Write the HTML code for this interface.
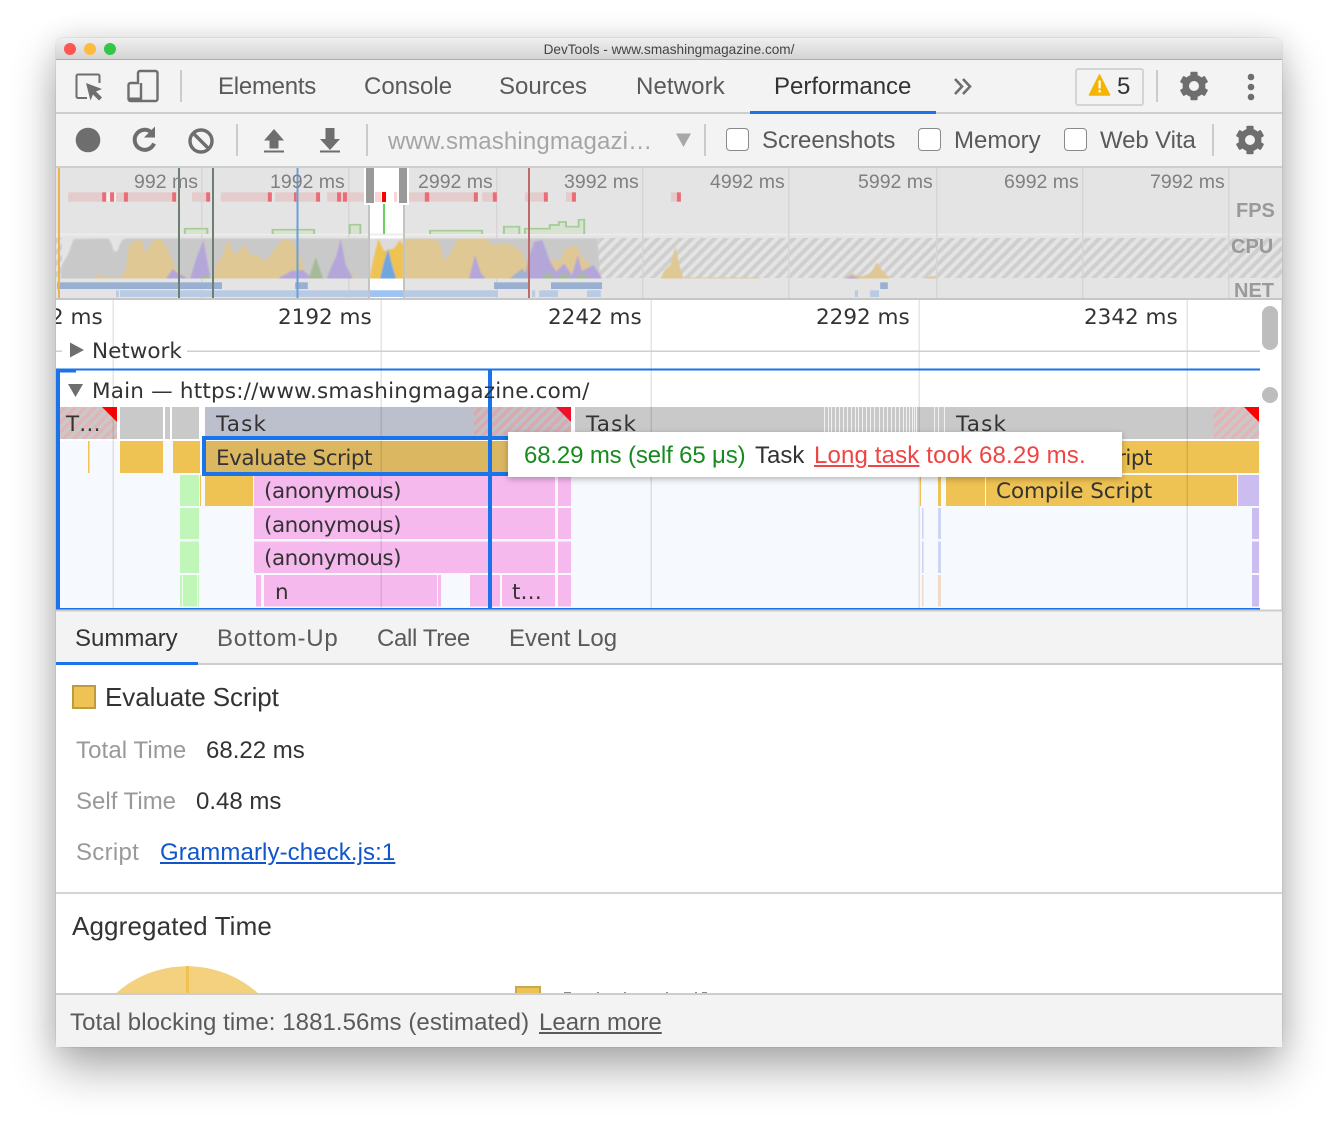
<!DOCTYPE html>
<html><head><meta charset="utf-8"><title>DevTools</title>
<style>
html,body{margin:0;padding:0;width:1338px;height:1121px;background:#fff;overflow:hidden}
#win{position:absolute;left:56px;top:38px;width:1226px;height:1009px;border-radius:7px;box-shadow:0 0 1px rgba(0,0,0,.35),0 22px 45px rgba(0,0,0,.32),0 0 28px rgba(0,0,0,.1)}
.abs{position:absolute}
.t{position:absolute;font-family:"Liberation Sans",sans-serif;font-size:24px;line-height:30px;white-space:nowrap;color:#5a5a5a}
.d{position:absolute;font-family:"DejaVu Sans",sans-serif;font-size:21.5px;line-height:30px;white-space:nowrap;color:#333}
.o{position:absolute;font-family:"Liberation Sans",sans-serif;font-size:19.5px;line-height:24px;white-space:nowrap;color:#808080;top:170px}
.sep{position:absolute;width:2px;background:#cbcbcb}
.cb{position:absolute;width:21px;height:21px;top:128px;background:#fff;border:1.5px solid #8a8a8a;border-radius:4px;box-sizing:content-box}
svg{position:absolute;left:0;top:0}
</style></head><body>
<div id="win"></div>

<!-- base -->
<div class="abs" style="left:56px;top:38px;width:1226px;height:1009px;background:#fff;border-radius:7px;overflow:hidden">
  <div class="abs" style="left:0;top:0;width:1226px;height:21px;background:linear-gradient(#efefef,#d4d4d4);border-bottom:1px solid #aeaeae"></div>
  <div class="abs" style="left:0;top:22px;width:1226px;height:106px;background:#f3f3f3"></div>
</div>
<div class="abs" style="left:64px;top:43px;width:12px;height:12px;border-radius:50%;background:#fc5753"></div>
<div class="abs" style="left:84px;top:43px;width:12px;height:12px;border-radius:50%;background:#fdbc40"></div>
<div class="abs" style="left:104px;top:43px;width:12px;height:12px;border-radius:50%;background:#33c748"></div>
<div class="t" style="left:0;width:1338px;text-align:center;top:35px;font-size:13.600px;color:#444">DevTools - www.smashingmagazine.com/</div>

<!-- main toolbar -->
<div class="abs" style="left:56px;top:112px;width:1226px;height:2px;background:#cdcdcd"></div>
<div class="abs" style="left:750px;top:111px;width:186px;height:3px;background:#1a73e8"></div>
<div class="sep" style="left:180px;top:70px;height:32px"></div>
<div class="sep" style="left:1156px;top:70px;height:32px"></div>
<div class="t" style="left:218px;top:72px;letter-spacing:-.25px">Elements</div>
<div class="t" style="left:364px;top:72px">Console</div>
<div class="t" style="left:499px;top:72px">Sources</div>
<div class="t" style="left:636px;top:72px;letter-spacing:.12px">Network</div>
<div class="t" style="left:774px;top:72px;color:#333">Performance</div>
<div class="abs" style="left:1075px;top:68px;width:65px;height:34px;border:2px solid #d4d4d4;border-radius:3px"></div>
<div class="t" style="left:1117px;top:72px;color:#333">5</div>

<!-- second toolbar -->
<div class="abs" style="left:56px;top:166px;width:1226px;height:2px;background:#cdcdcd"></div>
<div class="sep" style="left:236px;top:124px;height:32px"></div>
<div class="sep" style="left:366px;top:124px;height:32px"></div>
<div class="sep" style="left:704px;top:124px;height:32px"></div>
<div class="sep" style="left:1212px;top:124px;height:32px"></div>
<div class="t" style="left:388px;top:127px;color:#a5a5a5;letter-spacing:.15px">www.smashingmagazi…</div>
<div class="cb" style="left:726px"></div>
<div class="t" style="left:762px;top:126px">Screenshots</div>
<div class="cb" style="left:918px"></div>
<div class="t" style="left:954px;top:126px">Memory</div>
<div class="cb" style="left:1064px"></div>
<div class="t" style="left:1100px;top:126px;letter-spacing:-.1px">Web Vita</div>

<!-- overview -->
<svg width="1338" height="1121" viewBox="0 0 1338 1121" style="z-index:1">
  <defs>
    <pattern id="h" width="8" height="8" patternUnits="userSpaceOnUse" patternTransform="rotate(-45)">
      <rect width="8" height="8" fill="#e4e4e4"/><rect width="8" height="4" fill="#cfcfcf"/>
    </pattern>
    <pattern id="r" width="7" height="7" patternUnits="userSpaceOnUse" patternTransform="rotate(-45)">
      <rect width="7" height="7" fill="#e2b4b6"/><rect width="7" height="3.500" fill="#c9c9c9"/>
    </pattern>
    <pattern id="r2" width="7" height="7" patternUnits="userSpaceOnUse" patternTransform="rotate(-45)">
      <rect width="7" height="7" fill="#dba9ac"/><rect width="7" height="3.500" fill="#c0c0c8"/>
    </pattern>
    <clipPath id="cpuclip"><rect x="56" y="238" width="1226" height="40.500"/></clipPath>
    <filter id="soft" x="-5%" y="-15%" width="110%" height="130%"><feGaussianBlur stdDeviation=".9"/></filter>
    <g id="gear">
      <circle r="8.200" fill="none" stroke="#6e6e6e" stroke-width="6.400"/>
      <g fill="#6e6e6e">
        <rect x="-3.600" y="-14.300" width="7.200" height="5.500" rx="1"/>
        <rect x="-3.600" y="8.800" width="7.200" height="5.500" rx="1"/>
        <rect x="-3.600" y="-14.300" width="7.200" height="5.500" rx="1" transform="rotate(60)"/>
        <rect x="-3.600" y="-14.300" width="7.200" height="5.500" rx="1" transform="rotate(120)"/>
        <rect x="-3.600" y="-14.300" width="7.200" height="5.500" rx="1" transform="rotate(240)"/>
        <rect x="-3.600" y="-14.300" width="7.200" height="5.500" rx="1" transform="rotate(300)"/>
      </g>
    </g>
  </defs>

  <!-- toolbar icons -->
  <path d="M87 98H78a1.500 1.500 0 0 1-1.500-1.500V76a1.500 1.500 0 0 1 1.500-1.500h20a1.500 1.500 0 0 1 1.500 1.500v7" fill="none" stroke="#6e6e6e" stroke-width="2"/>
  <path d="M86 83l16 6-6 2.500 6 6-3 3-6-6-2.500 6z" fill="#6e6e6e"/>
  <path d="M140 71h15.500a2 2 0 0 1 2 2v26a2 2 0 0 1-2 2h-25a2 2 0 0 1-2-2V85a2 2 0 0 1 2-2h7.500V73a2 2 0 0 1 2-2z" fill="none" stroke="#6e6e6e" stroke-width="2.400"/>
  <path d="M129 97.500h13v3.500h-13z" fill="#6e6e6e"/><path d="M141 83v18" stroke="#6e6e6e" stroke-width="2.400"/>
  <path d="M963 79l7 7.500-7 7.500M955 79l7 7.500-7 7.500" fill="none" stroke="#6e6e6e" stroke-width="2.600"/>
  <path d="M1099.500 75l10 20h-20z" fill="#f4b400" stroke="#f4b400" stroke-width="1.500" stroke-linejoin="round"/>
  <path d="M1098.500 80.500h2.200v8h-2.200zM1098.500 90h2.200v2.500h-2.200z" fill="#fff"/>
  <use href="#gear" x="1194" y="86"/>
  <circle cx="1251" cy="77" r="3.300" fill="#6e6e6e"/><circle cx="1251" cy="87" r="3.300" fill="#6e6e6e"/><circle cx="1251" cy="97" r="3.300" fill="#6e6e6e"/>
  <circle cx="88" cy="140" r="12.300" fill="#6e6e6e"/>
  <path d="M154 143.500a10 10 0 1 1-2.800-11.300" fill="none" stroke="#6e6e6e" stroke-width="4"/>
  <path d="M155 126.500v11h-11z" fill="#6e6e6e"/>
  <circle cx="201" cy="141" r="11" fill="none" stroke="#6e6e6e" stroke-width="3.400"/>
  <path d="M193.500 133.500l15 15" stroke="#6e6e6e" stroke-width="3.400"/>
  <path d="M274 129l10 11.500h-5.500v8h-9v-8H264zM264 150.500h20v2h-20z" fill="#6e6e6e"/>
  <path d="M325.500 128h9v11h5.500l-10 11-10-11h5.500zM320 150.500h20v2h-20z" fill="#6e6e6e"/>
  <path d="M676 133.500h15l-7.500 13.500z" fill="#a8a8a8"/>
  <use href="#gear" x="1250" y="140"/>

  <!-- overview bg -->
  <rect x="56" y="168" width="1226" height="130" fill="#e4e4e4"/>
  <rect x="369" y="168" width="35" height="130" fill="#fff"/>
  <rect x="56" y="233.500" width="1226" height="2" fill="#ececec"/>
  <rect x="56" y="278" width="1226" height="20" fill="#e4e4e4"/>
  <rect x="369" y="278" width="35" height="20" fill="#fff"/>
  <rect x="598" y="238" width="684" height="40" fill="url(#h)"/>
  <rect x="56" y="238" width="6" height="40" fill="url(#h)"/>

  <!-- overview grid -->
  <g fill="#d6d6d6">
    <rect x="201" y="168" width="1.500" height="130"/><rect x="348" y="168" width="1.500" height="130"/><rect x="496" y="168" width="1.500" height="130"/><rect x="642" y="168" width="1.500" height="130"/><rect x="788" y="168" width="1.500" height="130"/><rect x="936" y="168" width="1.500" height="130"/><rect x="1082" y="168" width="1.500" height="130"/><rect x="1228" y="168" width="1.500" height="130"/>
  </g>

  <!-- fps bars -->
  <g transform="translate(50,165) scale(.39541,.33333)">
    <g fill="#e5cccc">
      <rect x="46" y="82" width="272" height="28"/><rect x="359" y="82" width="46" height="28"/><rect x="432" y="82" width="129" height="28"/><rect x="569" y="82" width="114" height="28"/><rect x="701" y="82" width="100" height="28"/><rect x="905" y="82" width="177" height="28"/><rect x="1093" y="82" width="37" height="28"/><rect x="1201" y="82" width="58" height="28"/><rect x="1305" y="82" width="25" height="28"/>
      <rect x="142" y="82" width="10" height="28" fill="#f0f0f0"/>
      <rect x="162" y="82" width="5" height="28" fill="#f0f0f0"/>
    </g>
    <g fill="#e96c76">
      <rect x="132" y="82" width="10" height="28"/><rect x="152" y="82" width="10" height="28"/><rect x="187" y="82" width="10" height="28"/><rect x="309" y="82" width="10" height="28"/><rect x="395" y="82" width="10" height="28"/><rect x="551" y="82" width="10" height="28"/><rect x="617" y="82" width="6" height="28"/><rect x="673" y="82" width="10" height="28"/><rect x="726" y="82" width="10" height="28"/><rect x="741" y="82" width="10" height="28"/><rect x="948" y="82" width="11" height="28"/><rect x="1072" y="82" width="10" height="28"/><rect x="1120" y="82" width="10" height="28"/><rect x="1249" y="82" width="10" height="28"/><rect x="1320" y="82" width="10" height="28"/>
    </g>
    <rect x="824" y="82" width="16" height="28" fill="#fbd5d5"/><rect x="840" y="82" width="10" height="28" fill="#f00"/><rect x="870" y="82" width="8" height="28" fill="#fbd5d5"/>

    <!-- green fps -->
    <g fill="#d7e2d0" stroke="#a3cd95" stroke-width="5">
      <path d="M341 207V191H398V207"/><path d="M563 207V194H668V207"/><path d="M758 207V179H785V207"/><path d="M961 207V197H1093V207"/><path d="M1148 207V185H1187V207"/><path d="M1201 207V191H1264V180H1287V171H1305V185H1337V164H1351V207"/>
    </g>
    <rect x="842" y="118" width="5" height="88" fill="#6ed05e"/>
  </g>

  <!-- CPU -->
  <g clip-path="url(#cpuclip)"><g filter="url(#soft)">
  <g transform="translate(50,165) scale(.39541,.33333)">
    <path fill="#c9c9c9" d="M25 360L30 300 45 270 60 222 145 220Q155 225 160 255 165 265 172 255 178 225 190 220L808 220 808 360z"/>
    <path fill="#c9c9c9" d="M893 360V220H1385L1392 360z"/>
    <path fill="#dcdcdc" d="M808 360V220H893V360z"/>
    <g fill="#dfc893">
      <path d="M110 360V340L125 328 140 338H180L192 310 200 240 215 228 232 225 240 262 250 250 262 222H280L295 245 305 275 318 310 345 338V360z"/>
      <path d="M415 360V338L420 300 435 275 450 225 465 265 480 260 490 235 505 268 525 272 545 290 565 255 590 222 610 225 630 265 650 338V360z"/>
      <path d="M700 360V338L730 330 760 320 770 338V360z"/>
      <path d="M893 360V222H960L985 230 995 285 1010 270 1030 222 1100 220 1120 240 1145 235 1165 240 1190 255 1205 295 1215 338V360z"/>
      <path d="M1240 360V325L1270 280 1290 290 1300 255 1330 240 1345 275 1375 310 1395 338V360z"/>
      <path d="M1555 360V338L1568 305V360z"/>
    </g>
    <path fill="#eec253" d="M808 360V340L815 295 830 220 845 258 870 250 885 225 893 240V360z"/>
    <g fill="#b5a6da">
      <path d="M295 360V338L310 312 325 325 345 338V360z"/>
      <path d="M355 360V338L370 280 388 225 398 290 405 338V360z"/>
      <path d="M580 360V338L610 318 640 315 660 338V360z"/>
      <path d="M700 360V338L710 310 725 270 735 220 748 300 765 338V360z"/>
      <path d="M1060 360V338L1075 270 1090 325 1100 338V360z"/>
      <path d="M1200 360V338L1210 280 1225 230 1245 225 1265 290 1280 320 1300 295 1320 330 1335 270 1345 318 1375 300 1395 338V360z"/>
    </g>
    <g fill="#a5bb98">
      <path d="M655 360V338L672 276 690 338V360z"/>
      <path d="M1245 360V338L1260 322 1275 338V360zM1285 360V338L1300 322 1315 338V360zM1330 360V338L1345 322 1360 338V360z"/>
      <path d="M380 360V338L392 330 405 338V360z"/>
    </g>
    <path fill="#6ea6e0" d="M835 360V340L845 290 855 252 865 300 875 340V360z"/>
    <path fill="#a1b3d0" d="M1165 360V338L1195 310 1210 338V360z"/>
  </g>
  <g transform="translate(660,165) scale(.40179,.33333)">
    <path fill="#dfc893" d="M2 360V338L12 315 26 300 38 243 48 300 58 338V360z"/>
    <path fill="#dfc893" d="M60 360V338H250V360zM460 360V338L478 325 500 335 525 325 540 292 555 320 572 338V360z"/>
    <path fill="#b5a6da" d="M460 360V340L478 332 495 340V360z"/>
    <path fill="#dfc893" d="M660 360V338L675 333 690 338V360z"/>
  </g>
  </g></g>

  <g transform="translate(50,165) scale(.39541,.33333)">
    <!-- net -->
    <g fill="#9ab0d2"><rect x="18" y="352" width="417" height="20"/><rect x="620" y="352" width="32" height="20"/><rect x="1123" y="352" width="88" height="20"/><rect x="1267" y="352" width="129" height="20"/></g>
    <g fill="#b9cae3"><rect x="167" y="376" width="7" height="20"/><rect x="177" y="376" width="956" height="20"/><rect x="1219" y="376" width="8" height="20"/><rect x="1237" y="376" width="48" height="20"/><rect x="1358" y="376" width="35" height="20"/></g>
    <rect x="808" y="376" width="85" height="20" fill="#a0c4f2"/>
  </g>
  <g transform="translate(660,165) scale(.40179,.33333)">
    <rect x="27" y="82" width="15" height="28" fill="#e5cccc"/><rect x="42" y="82" width="10" height="28" fill="#e96c76"/>
    <rect x="548" y="352" width="19" height="20" fill="#9ab0d2"/>
    <rect x="485" y="376" width="8" height="20" fill="#b9cae3"/><rect x="523" y="376" width="22" height="20" fill="#b9cae3"/>
  </g>

  <!-- overview markers -->
  <rect x="58" y="168" width="2" height="130" fill="#edb351"/>
  <rect x="178" y="168" width="2" height="130" fill="#6d7f72"/>
  <rect x="212" y="168" width="2" height="130" fill="#6d7f72"/>
  <rect x="296.500" y="168" width="2" height="130" fill="#6aa0d8"/>
  <rect x="528" y="168" width="2" height="130" fill="#bf6a6a"/>
  <rect x="368" y="204" width="2" height="94" fill="#c4c4c4"/><rect x="403" y="204" width="2" height="94" fill="#c4c4c4"/>
  <rect x="364" y="168" width="45" height="37" fill="#fff"/>
  <rect x="366" y="168" width="8" height="35" fill="#999"/><rect x="399" y="168" width="8" height="35" fill="#999"/>
  <rect x="382" y="192" width="4" height="10" fill="#f00"/><rect x="375" y="192" width="6" height="10" fill="#fbd5d5"/><rect x="394" y="192" width="3" height="10" fill="#fbd5d5"/>
  <rect x="383" y="204" width="2" height="30" fill="#6ed05e"/>
  <rect x="56" y="298" width="1226" height="2" fill="#c6c6c6"/>

  <!-- flame backgrounds -->
  <rect x="56" y="300" width="1226" height="310" fill="#fff"/>
  <rect x="60" y="441" width="1200" height="167" fill="#f6f9fe"/>

  <!-- Row 1 -->
  <rect x="60" y="407" width="57" height="32" fill="url(#r)"/>
  <path d="M102 407h15v15z" fill="#f00"/>
  <rect x="120" y="407" width="43" height="32" fill="#c9c9c9"/><rect x="165" y="407" width="5" height="32" fill="#c9c9c9"/><rect x="172" y="407" width="27" height="32" fill="#c9c9c9"/>
  <rect x="205" y="407" width="269" height="32" fill="#bbc0cc"/>
  <rect x="474" y="407" width="97" height="32" fill="url(#r2)"/>
  <path d="M556 407h15v15z" fill="#ef0f2d"/>
  <rect x="575" y="407" width="684" height="32" fill="#c9c9c9"/>
  <rect x="1214" y="407" width="45" height="32" fill="url(#r)"/>
  <path d="M1244 407h15v15z" fill="#f00"/>
  <g fill="#f2f2f2">
    <rect x="824" y="407" width="1" height="25"/><rect x="828" y="407" width="1" height="25"/><rect x="831" y="407" width="1" height="25"/><rect x="835" y="407" width="1" height="25"/><rect x="839" y="407" width="1" height="25"/><rect x="843" y="407" width="1" height="25"/><rect x="847" y="407" width="1" height="25"/><rect x="851" y="407" width="1" height="25"/><rect x="855" y="407" width="1" height="25"/><rect x="858" y="407" width="1" height="25"/><rect x="862" y="407" width="1" height="25"/><rect x="866" y="407" width="1" height="25"/><rect x="870" y="407" width="1" height="25"/><rect x="874" y="407" width="1" height="25"/><rect x="879" y="407" width="1" height="25"/><rect x="883" y="407" width="1" height="25"/><rect x="887" y="407" width="1" height="25"/><rect x="891" y="407" width="1" height="25"/><rect x="895" y="407" width="1" height="25"/><rect x="899" y="407" width="1" height="25"/><rect x="903" y="407" width="1" height="25"/><rect x="906" y="407" width="1" height="25"/><rect x="909" y="407" width="1" height="25"/><rect x="912" y="407" width="1" height="25"/><rect x="914" y="407" width="1" height="25"/><rect x="916" y="407" width="1" height="25"/><rect x="934" y="407" width="1" height="25"/><rect x="938" y="407" width="1" height="25"/><rect x="944" y="407" width="1" height="25"/>
  </g>

  <!-- Row 2 -->
  <rect x="88" y="441" width="1.500" height="32" fill="#eec253"/>
  <rect x="120" y="441" width="43" height="32" fill="#eec253"/>
  <rect x="173" y="441" width="27" height="32" fill="#eec253"/>
  <rect x="206" y="441" width="305" height="32" fill="#dcb762"/>
  <rect x="946" y="441" width="313" height="32" fill="#eec253"/>

  <!-- Row 3 -->
  <rect x="180" y="475" width="19" height="31" fill="#c0f6b8"/>
  <rect x="200" y="475" width="1" height="31" fill="#eec253"/>
  <rect x="205" y="475" width="48" height="31" fill="#eec253"/>
  <rect x="254" y="475" width="301" height="31" fill="#f5b9ee"/>
  <rect x="558" y="475" width="13" height="31" fill="#f5b9ee"/>
  <rect x="920" y="475" width="1" height="31" fill="#eec253"/>
  <rect x="938" y="475" width="3" height="31" fill="#eec253"/>
  <rect x="946" y="475" width="39" height="31" fill="#eec253"/>
  <rect x="986" y="475" width="251" height="31" fill="#eec253"/>
  <rect x="1238" y="475" width="21" height="31" fill="#cbbdf0"/>

  <!-- Rows 4,5 -->
  <rect x="180" y="508" width="19" height="31" fill="#c0f6b8"/>
  <rect x="254" y="508" width="301" height="31" fill="#f5b9ee"/>
  <rect x="558" y="508" width="13" height="31" fill="#f5b9ee"/>
  <rect x="922" y="508" width="1.500" height="31" fill="#cdd5f3"/>
  <rect x="938" y="508" width="3" height="31" fill="#cdd5f3"/>
  <rect x="1252" y="508" width="7" height="31" fill="#cbbdf0"/>
  <rect x="180" y="541.500" width="19" height="31.500" fill="#c0f6b8"/>
  <rect x="254" y="541.500" width="301" height="31.500" fill="#f5b9ee"/>
  <rect x="558" y="541.500" width="13" height="31.500" fill="#f5b9ee"/>
  <rect x="922" y="541.500" width="1.500" height="31.500" fill="#cdd5f3"/>
  <rect x="938" y="541.500" width="3" height="31.500" fill="#cdd5f3"/>
  <rect x="1252" y="541.500" width="7" height="31.500" fill="#cbbdf0"/>

  <!-- Row 6 -->
  <rect x="180" y="575" width="19" height="31.500" fill="#c0f6b8"/>
  <rect x="182" y="575" width="1" height="31.500" fill="#f2fdf0"/><rect x="197" y="575" width="1" height="31.500" fill="#f2fdf0"/>
  <rect x="256" y="575" width="5" height="31.500" fill="#f5b9ee"/>
  <rect x="264" y="575" width="173" height="31.500" fill="#f5b9ee"/>
  <rect x="438" y="575" width="3" height="31.500" fill="#f5b9ee"/>
  <rect x="470" y="575" width="30" height="31.500" fill="#f5b9ee"/>
  <rect x="502" y="575" width="53" height="31.500" fill="#f5b9ee"/>
  <rect x="558" y="575" width="13" height="31.500" fill="#f5b9ee"/>
  <rect x="922" y="575" width="1.500" height="31.500" fill="#f0dcc6"/>
  <rect x="938" y="575" width="3" height="31.500" fill="#f0dcc6"/>
  <rect x="1252" y="575" width="7" height="31.500" fill="#cbbdf0"/>

  <!-- flame grid -->
  <g fill="#000" fill-opacity=".1">
    <rect x="112.500" y="300" width="1.500" height="308"/><rect x="380.500" y="300" width="1.500" height="308"/><rect x="650.500" y="300" width="1.500" height="308"/><rect x="918.500" y="300" width="1.500" height="308"/><rect x="1186.500" y="300" width="1.500" height="308"/>
  </g>
  <rect x="187" y="350.500" width="1073" height="1.500" fill="#cfcfcf"/>
  <rect x="56" y="350.500" width="6" height="1.500" fill="#cfcfcf"/>
  <path d="M70 342.500l14 7.500-14 7.500z" fill="#6e6e6e"/>
  <path d="M68 384h15l-7.500 13z" fill="#6e6e6e"/>

  <!-- selection borders -->
  <rect x="56" y="368.500" width="1204" height="2" fill="#1a73e8"/>
  <rect x="56" y="608" width="1204" height="1.500" fill="#1a73e8"/>
  <rect x="56" y="368.500" width="4" height="241" fill="#1a73e8"/>
  <rect x="56" y="368.500" width="20" height="4" fill="#1a73e8"/>
  <rect x="204" y="438" width="310" height="36" fill="none" stroke="#1a73e8" stroke-width="4"/>
  <rect x="488" y="370" width="4" height="238" fill="#1a73e8"/>

  <!-- scrollbar -->
  <rect x="1262" y="306" width="16" height="44" rx="8" fill="#bdbdbd"/>
  <circle cx="1270" cy="395" r="8" fill="#bdbdbd"/>
  <rect x="1281" y="300" width="1" height="310" fill="#e0e0e0"/>

  <!-- details -->
  <rect x="56" y="611" width="1226" height="52" fill="#f3f3f3"/>
  <rect x="56" y="609.500" width="1226" height="2" fill="#cdcdcd"/>
  <rect x="56" y="663" width="1226" height="2" fill="#cdcdcd"/>
  <rect x="56" y="662" width="142" height="3" fill="#1a73e8"/>
  <rect x="73" y="686" width="22" height="22" fill="#eec253" stroke="#c09a43" stroke-width="2"/>
  <rect x="56" y="892" width="1226" height="2" fill="#d4d4d4"/>
  <path d="M114 995A107 107 0 0 1 260 995z" fill="#f3d17e"/>
  <rect x="186" y="966" width="3" height="28" fill="#eec253"/>
  <rect x="516" y="987" width="24" height="8" fill="#eec253" stroke="#c9a94f" stroke-width="2"/>
  <g fill="#8a8a8a"><rect x="564" y="992" width="7" height="1"/><rect x="597" y="992" width="2" height="1"/><rect x="624" y="992" width="2" height="1"/><rect x="666" y="992" width="2" height="1"/><rect x="695" y="992" width="2" height="1"/><rect x="702" y="992" width="5" height="1"/></g>
  <rect x="56" y="995" width="1226" height="52" fill="#f3f3f3"/>
  <rect x="56" y="993" width="1226" height="2" fill="#cdcdcd"/>
</svg>

<!-- text above svg -->
<div style="position:absolute;left:0;top:0;width:1338px;height:1121px;z-index:2">
  <div class="o" style="left:134px">992 ms</div>
  <div class="o" style="left:270px">1992 ms</div>
  <div class="o" style="left:418px">2992 ms</div>
  <div class="o" style="left:564px">3992 ms</div>
  <div class="o" style="left:710px">4992 ms</div>
  <div class="o" style="left:858px">5992 ms</div>
  <div class="o" style="left:1004px">6992 ms</div>
  <div class="o" style="left:1150px">7992 ms</div>
  <div class="t" style="left:1236px;top:196px;font-size:20px;font-weight:bold;color:#9a9a9a">FPS</div>
  <div class="t" style="left:1231px;top:232px;font-size:20px;font-weight:bold;color:#9a9a9a">CPU</div>
  <div class="t" style="left:1234px;top:276px;font-size:20px;font-weight:bold;color:#9a9a9a">NET</div>

  <div class="abs" style="left:56px;top:303px;width:50px;height:30px;overflow:hidden"><div class="d" style="left:-6px;top:0">2 ms</div></div>
  <div class="d" style="left:278px;top:303px">2192 ms</div>
  <div class="d" style="left:548px;top:303px">2242 ms</div>
  <div class="d" style="left:816px;top:303px">2292 ms</div>
  <div class="d" style="left:1084px;top:303px">2342 ms</div>
  <div class="d" style="left:92px;top:337px">Network</div>
  <div class="d" style="left:92px;top:377px;letter-spacing:.2px">Main — https://www.smashingmagazine.com/</div>
  <div class="d" style="left:66px;top:410px">T…</div>
  <div class="d" style="left:216px;top:410px;letter-spacing:1.200px">Task</div>
  <div class="d" style="left:586px;top:410px;letter-spacing:1.200px">Task</div>
  <div class="d" style="left:956px;top:410px;letter-spacing:1.200px">Task</div>
  <div class="d" style="left:216px;top:444px;letter-spacing:-.47px">Evaluate Script</div>
  <div class="d" style="left:996px;top:444px;letter-spacing:-.47px">Evaluate Script</div>
  <div class="d" style="left:264px;top:477px;letter-spacing:-.45px">(anonymous)</div>
  <div class="d" style="left:996px;top:477px;letter-spacing:-.07px">Compile Script</div>
  <div class="d" style="left:264px;top:511px;letter-spacing:-.45px">(anonymous)</div>
  <div class="d" style="left:264px;top:544px;letter-spacing:-.45px">(anonymous)</div>
  <div class="d" style="left:275px;top:578px">n</div>
  <div class="d" style="left:512px;top:578px">t…</div>

  <div class="abs" style="left:508px;top:432px;width:614px;height:45px;background:#fff;box-shadow:0 2px 6px rgba(0,0,0,.28)"></div>
  <div class="t" style="left:524px;top:441px;color:#188a1f;letter-spacing:-.15px">68.29 ms (self 65 μs)</div>
  <div class="t" style="left:755px;top:441px;color:#333">Task</div>
  <div class="t" style="left:814px;top:441px;color:#ef4444;letter-spacing:.15px"><u>Long task</u> took 68.29 ms.</div>

  <div class="t" style="left:75px;top:624px;color:#333">Summary</div>
  <div class="t" style="left:217px;top:624px;letter-spacing:.75px">Bottom-Up</div>
  <div class="t" style="left:377px;top:624px;letter-spacing:-.35px">Call Tree</div>
  <div class="t" style="left:509px;top:624px">Event Log</div>

  <div class="t" style="left:105px;top:682px;font-size:26px;color:#333;letter-spacing:-.07px">Evaluate Script</div>
  <div class="t" style="left:76px;top:736px;color:#999;letter-spacing:.1px">Total Time</div>
  <div class="t" style="left:206px;top:736px;color:#333">68.22 ms</div>
  <div class="t" style="left:76px;top:787px;color:#999">Self Time</div>
  <div class="t" style="left:196px;top:787px;color:#333">0.48 ms</div>
  <div class="t" style="left:76px;top:838px;color:#999;letter-spacing:.3px">Script</div>
  <div class="t" style="left:160px;top:838px;color:#1155cc;letter-spacing:.1px"><u>Grammarly-check.js:1</u></div>
  <div class="t" style="left:72px;top:911px;font-size:26px;color:#333;letter-spacing:.13px">Aggregated Time</div>
  <div class="t" style="left:70px;top:1008px;color:#5a5a5a;letter-spacing:.07px">Total blocking time: 1881.56ms (estimated)</div>
  <div class="t" style="left:539px;top:1008px;color:#5a5a5a"><u>Learn more</u></div>
</div>
</body></html>
